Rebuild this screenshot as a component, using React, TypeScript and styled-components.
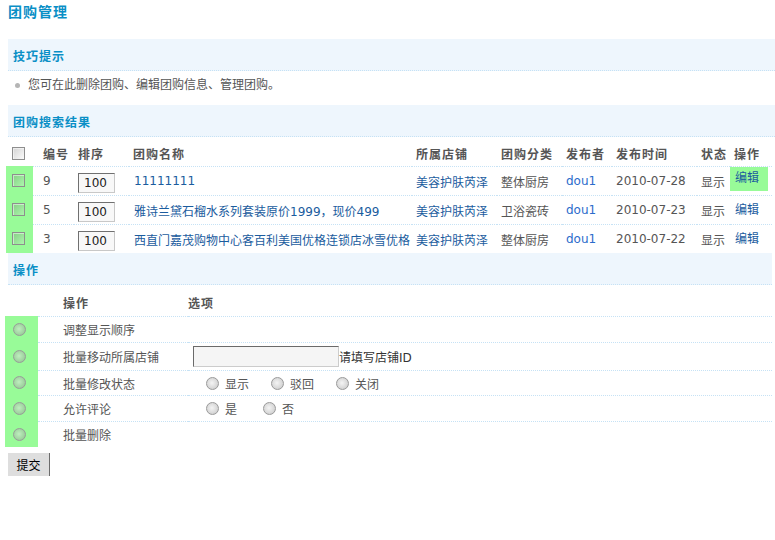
import styled, { createGlobalStyle } from "styled-components";

const GlobalStyle = createGlobalStyle`
  body {
    margin: 0;
    background: #fff;
    font-family: "DejaVu Sans", "Noto Sans CJK SC", sans-serif;
    font-size: 12px;
    color: #555;
  }
`;

const GREEN = "#98fb98";
const DOTTED = "1px dotted #c6e2f5";

const PageTitle = styled.h1`
  margin: 0;
  padding-left: 8px;
  height: 39px;
  line-height: 24px;
  font-size: 14px;
  letter-spacing: 1px;
  font-weight: bold;
  color: #0a8fc6;
`;

const Band = styled.h3<{ $right?: number }>`
  box-sizing: border-box;
  margin: 0 ${(p) => p.$right ?? 0}px 0 8px;
  padding: 6px 0 0 5px;
  height: 32px;
  line-height: 25px;
  background: #eef6fd;
  border-bottom: ${DOTTED};
  font-size: 12px;
  letter-spacing: 1px;
  font-weight: bold;
  color: #0a8fc6;
`;

const Tip = styled.ul`
  margin: 0;
  padding: 0 0 0 15px;
  list-style: none;
  height: 34px;
  line-height: 29px;
`;

const TipItem = styled.li`
  display: flex;
  align-items: center;
  gap: 8px;
  color: #555;
  &::before {
    content: "";
    width: 5px;
    height: 5px;
    border-radius: 50%;
    background: #b5b5b5;
  }
`;

const COLS = "27px 41px 55px 283px 85px 65px 50px 85px 33px 42px";

const ListGrid = styled.div`
  margin-left: 6px;
  width: 766px;
`;

const ListRow = styled.div`
  display: grid;
  grid-template-columns: ${COLS};
  height: 29px;
`;

const Cell = styled.div<{ $pl?: number; $green?: boolean; $line?: boolean; $head?: boolean }>`
  display: flex;
  align-items: center;
  padding-left: ${(p) => p.$pl ?? 4}px;
  padding-top: ${(p) => (p.$head ? 3 : 0)}px;
  white-space: nowrap;
  overflow: hidden;
  background: ${(p) => (p.$green ? GREEN : "transparent")};
  border-top: ${(p) => (p.$line && !p.$green ? DOTTED : "none")};
  font-weight: ${(p) => (p.$head ? "bold" : "normal")};
  letter-spacing: ${(p) => (p.$head ? 1 : 0)}px;
  color: #555;
`;

const Box = styled.span<{ $tint?: boolean }>`
  display: inline-block;
  width: 11px;
  height: 11px;
  border: 1px solid #8e8e8e;
  background: ${(p) =>
    p.$tint
      ? "linear-gradient(135deg, rgba(120,170,120,0.55), rgba(200,240,200,0.4))"
      : "linear-gradient(135deg, #d4d4d4, #fbfbfb)"};
  box-shadow: inset 1px 1px 0 rgba(255, 255, 255, 0.5);
`;

const Radio = styled.span<{ $tint?: boolean }>`
  display: inline-block;
  width: 11px;
  height: 11px;
  border-radius: 50%;
  border: 1px solid #9a9a9a;
  background: ${(p) =>
    p.$tint
      ? "radial-gradient(circle at 45% 45%, #bfeebf 0%, #9ccf9c 70%, #86b886 100%)"
      : "radial-gradient(circle at 45% 45%, #f4f4f4 0%, #d6d6d6 65%, #b8b8b8 100%)"};
`;

const SortInput = styled.span`
  display: inline-flex;
  align-items: center;
  box-sizing: border-box;
  width: 37px;
  height: 20px;
  padding-left: 5px;
  margin-top: 3px;
  background: #f8f8f8;
  border: 1px solid;
  border-color: #707070 #c8c8c8 #c8c8c8 #707070;
  color: #222;
  font-size: 12px;
`;

const Link = styled.a<{ $light?: boolean }>`
  color: ${(p) => (p.$light ? "#2b6ccb" : "#1b5c9e")};
  text-decoration: none;
`;

const EditTag = styled.a<{ $on?: boolean }>`
  display: inline-block;
  box-sizing: border-box;
  width: 38px;
  margin-left: -5px;
  margin-bottom: ${(p) => (p.$on ? 5 : 0)}px;
  padding: 0 5px;
  line-height: 25px;
  background: ${(p) => (p.$on ? GREEN : "transparent")};
  color: #1b5c9e;
  text-decoration: none;
`;

const OP_COLS = "33px 150px 1fr";

const OpTable = styled.div`
  margin-left: 5px;
  width: 767px;
`;

const OpRow = styled.div<{ $h: number }>`
  display: grid;
  grid-template-columns: ${OP_COLS};
  height: ${(p) => p.$h}px;
`;

const OpCell = styled.div<{ $pl?: number; $green?: boolean; $line?: boolean; $head?: boolean }>`
  display: flex;
  align-items: center;
  padding-left: ${(p) => p.$pl ?? 0}px;
  padding-top: ${(p) => (p.$head ? 4 : 0)}px;
  background: ${(p) => (p.$green ? GREEN : "transparent")};
  border-top: ${(p) => (p.$line && !p.$green ? DOTTED : "none")};
  font-weight: ${(p) => (p.$head ? "bold" : "normal")};
  letter-spacing: ${(p) => (p.$head ? 1 : 0)}px;
  color: #555;
  white-space: nowrap;
`;

const TextInput = styled.span`
  display: inline-block;
  box-sizing: border-box;
  width: 146px;
  height: 21px;
  margin-left: 5px;
  background: #f5f5f5;
  border: 1px solid;
  border-color: #6a6a6a #cccccc #cccccc #6a6a6a;
`;

const Hint = styled.span`
  color: #333;
`;

const Option = styled.label<{ $gap: number }>`
  display: inline-flex;
  align-items: center;
  gap: 6px;
  margin-right: ${(p) => p.$gap}px;
  color: #555;
`;

const Options = styled.div`
  display: flex;
  align-items: center;
  padding-left: 18px;
`;

const Submit = styled.button`
  display: block;
  margin: 6px 0 0 8px;
  width: 42px;
  height: 23px;
  padding: 0;
  background: #dedede;
  border: none;
  border-right: 1px solid #6c6c6c;
  font-family: "Noto Sans CJK SC", sans-serif;
  font-size: 12px;
  color: #000;
`;

const groups = [
  { id: 9, name: "11111111", shop: "美容护肤芮泽", cat: "整体厨房", date: "2010-07-28", on: true },
  { id: 5, name: "雅诗兰黛石榴水系列套装原价1999，现价499", shop: "美容护肤芮泽", cat: "卫浴瓷砖", date: "2010-07-23" },
  { id: 3, name: "西直门嘉茂购物中心客百利美国优格连锁店冰雪优格", shop: "美容护肤芮泽", cat: "整体厨房", date: "2010-07-22" },
];

const heads = ["编号", "排序", "团购名称", "所属店铺", "团购分类", "发布者", "发布时间", "状态", "操作"];

export default function App() {
  return (
    <>
      <GlobalStyle />
      <PageTitle>团购管理</PageTitle>

      <Band>技巧提示</Band>
      <Tip>
        <TipItem>您可在此删除团购、编辑团购信息、管理团购。</TipItem>
      </Tip>

      <Band>团购搜索结果</Band>
      <ListGrid>
        <ListRow>
          <Cell $pl={6} $head>
            <Box />
          </Cell>
          {heads.map((h, i) => (
            <Cell key={h} $pl={i === 0 ? 10 : 4} $head>
              {h}
            </Cell>
          ))}
        </ListRow>
        {groups.map((g) => (
          <ListRow key={g.id}>
            <Cell $pl={6} $green $line>
              <Box $tint />
            </Cell>
            <Cell $pl={10} $line>{g.id}</Cell>
            <Cell $line>
              <SortInput>100</SortInput>
            </Cell>
            <Cell $pl={5} $line>
              <Link href="#">{g.name}</Link>
            </Cell>
            <Cell $line>
              <Link href="#">{g.shop}</Link>
            </Cell>
            <Cell $line>{g.cat}</Cell>
            <Cell $line>
              <Link href="#" $light>dou1</Link>
            </Cell>
            <Cell $line>{g.date}</Cell>
            <Cell $line>显示</Cell>
            <Cell $pl={5} $line>
              <EditTag href="#" $on={g.on}>编辑</EditTag>
            </Cell>
          </ListRow>
        ))}
      </ListGrid>

      <Band $right={3}>操作</Band>
      <OpTable>
        <OpRow $h={31}>
          <OpCell $head />
          <OpCell $pl={25} $head>操作</OpCell>
          <OpCell $head>选项</OpCell>
        </OpRow>
        <OpRow $h={26}>
          <OpCell $pl={8} $green $line><Radio $tint /></OpCell>
          <OpCell $pl={25} $line>调整显示顺序</OpCell>
          <OpCell $line />
        </OpRow>
        <OpRow $h={28}>
          <OpCell $pl={8} $green $line><Radio $tint /></OpCell>
          <OpCell $pl={25} $line>批量移动所属店铺</OpCell>
          <OpCell $line>
            <TextInput />
            <Hint>请填写店铺ID</Hint>
          </OpCell>
        </OpRow>
        <OpRow $h={25}>
          <OpCell $pl={8} $green $line><Radio $tint /></OpCell>
          <OpCell $pl={25} $line>批量修改状态</OpCell>
          <OpCell $line>
            <Options>
              <Option $gap={22}><Radio />显示</Option>
              <Option $gap={22}><Radio />驳回</Option>
              <Option $gap={0}><Radio />关闭</Option>
            </Options>
          </OpCell>
        </OpRow>
        <OpRow $h={26}>
          <OpCell $pl={8} $green $line><Radio $tint /></OpCell>
          <OpCell $pl={25} $line>允许评论</OpCell>
          <OpCell $line>
            <Options>
              <Option $gap={26}><Radio />是</Option>
              <Option $gap={0}><Radio />否</Option>
            </Options>
          </OpCell>
        </OpRow>
        <OpRow $h={26}>
          <OpCell $pl={8} $green $line><Radio $tint /></OpCell>
          <OpCell $pl={25} $line>批量删除</OpCell>
          <OpCell $line />
        </OpRow>
      </OpTable>
      <Submit type="button">提交</Submit>
    </>
  );
}
